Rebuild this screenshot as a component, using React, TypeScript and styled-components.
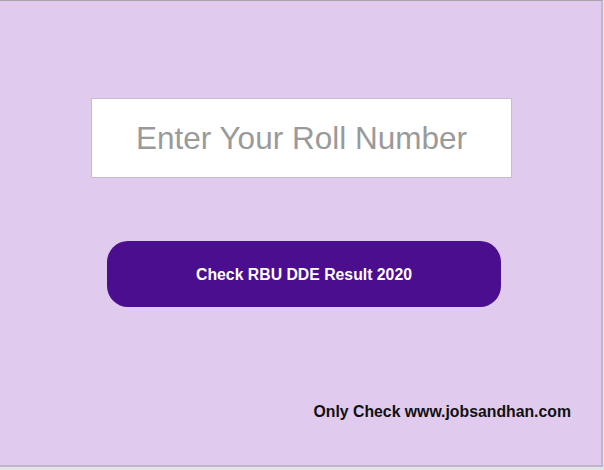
import styled, { createGlobalStyle } from "styled-components";

const GlobalStyle = createGlobalStyle`
  html, body {
    margin: 0;
    padding: 0;
    background: #e1e5e5;
  }
  body {
    font-family: "Liberation Sans", Arial, sans-serif;
  }
`;

const Frame = styled.div`
  box-sizing: border-box;
  width: 603px;
  height: 467px;
  background: #e0caed;
  border-top: 1px solid #a9a2ab;
  border-right: 2px solid #c4b4cc;
  border-bottom: 2px solid #c2b4c8;
  display: flex;
  flex-direction: column;
  align-items: center;
  padding-top: 97px;
`;

const RollInput = styled.input`
  box-sizing: border-box;
  width: 421px;
  height: 80px;
  margin-left: 2px;
  border: 1px solid #c6bccd;
  background: #ffffff;
  outline: none;
  text-align: center;
  font-family: "Liberation Sans", Arial, sans-serif;
  font-size: 31.5px;
  color: #333;

  &::placeholder {
    color: #9a9a9a;
  }
`;

const CheckButton = styled.button`
  box-sizing: border-box;
  width: 394px;
  height: 66px;
  margin-top: 63px;
  margin-left: 7px;
  padding-top: 3px;
  border: none;
  border-radius: 21px;
  background: #4a0e8e;
  color: #ffffff;
  font-family: "Liberation Sans", Arial, sans-serif;
  font-weight: bold;
  font-size: 15.8px;
  cursor: pointer;
`;

const Footer = styled.div`
  align-self: stretch;
  display: flex;
  justify-content: flex-end;
  padding-right: 30px;
  margin-top: 96px;
  font-weight: bold;
  font-size: 15.8px;
  color: #111;
`;

export default function App() {
  return (
    <>
      <GlobalStyle />
      <Frame>
        <RollInput type="text" placeholder="Enter Your Roll Number" />
        <CheckButton>Check RBU DDE Result 2020</CheckButton>
        <Footer>Only Check www.jobsandhan.com</Footer>
      </Frame>
    </>
  );
}
